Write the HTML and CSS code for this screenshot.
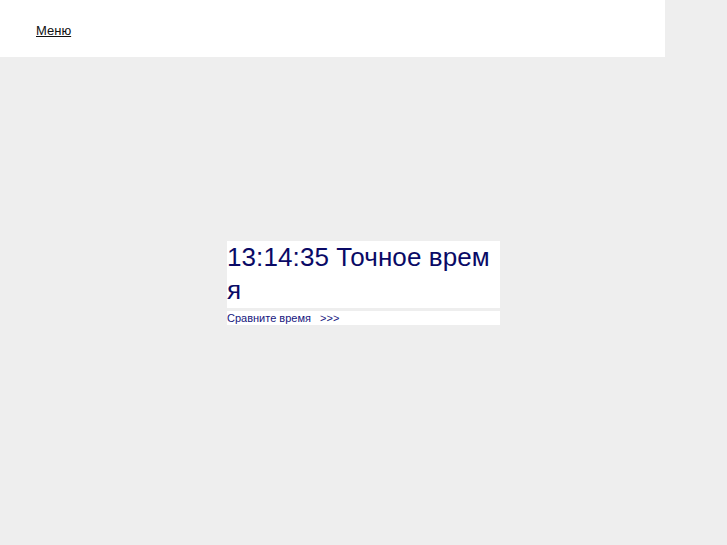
FILE: index.html
```html
<!DOCTYPE html>
<html lang="ru">
<head>
<meta charset="utf-8">
<title>Точное время</title>
<link rel="stylesheet" href="styles.css">
</head>
<body>
<header class="top">
  <a class="menu-link" href="#">Меню</a>
</header>
<main class="stage">
  <div class="clock">
    <div class="clock-time">13:14:35 Точное время</div>
    <div class="clock-compare"><a href="#">Сравните время &nbsp; &gt;&gt;&gt;</a></div>
  </div>
</main>
</body>
</html>
```

FILE: styles.css
```css
html, body {
  margin: 0;
  padding: 0;
  background: #eeeeee;
  font-family: "Liberation Sans", Arial, sans-serif;
}
.top {
  width: 665px;
  height: 57px;
  background: #ffffff;
  box-sizing: border-box;
  padding: 21px 0 0 36px;
}
.menu-link {
  font-size: 13px;
  line-height: 16px;
  color: #111111;
  text-decoration: underline;
}
.stage {
  padding-top: 184px;
  display: flex;
  justify-content: flex-start;
  padding-left: 227px;
}
.clock {
  width: 273px;
  display: flex;
  flex-direction: column;
  gap: 3px;
}
.clock-time {
  background: #ffffff;
  color: #0a0a66;
  font-size: 26px;
  line-height: 33px;
  padding: 0 0 1px 0;
  letter-spacing: 0.1px;
  word-break: break-all;
  height: 67px;
  box-sizing: border-box;
}
.clock-compare {
  background: #ffffff;
  font-size: 11px;
  line-height: 14px;
  height: 14px;
}
.clock-compare a {
  color: #16167e;
  text-decoration: none;
}
```
